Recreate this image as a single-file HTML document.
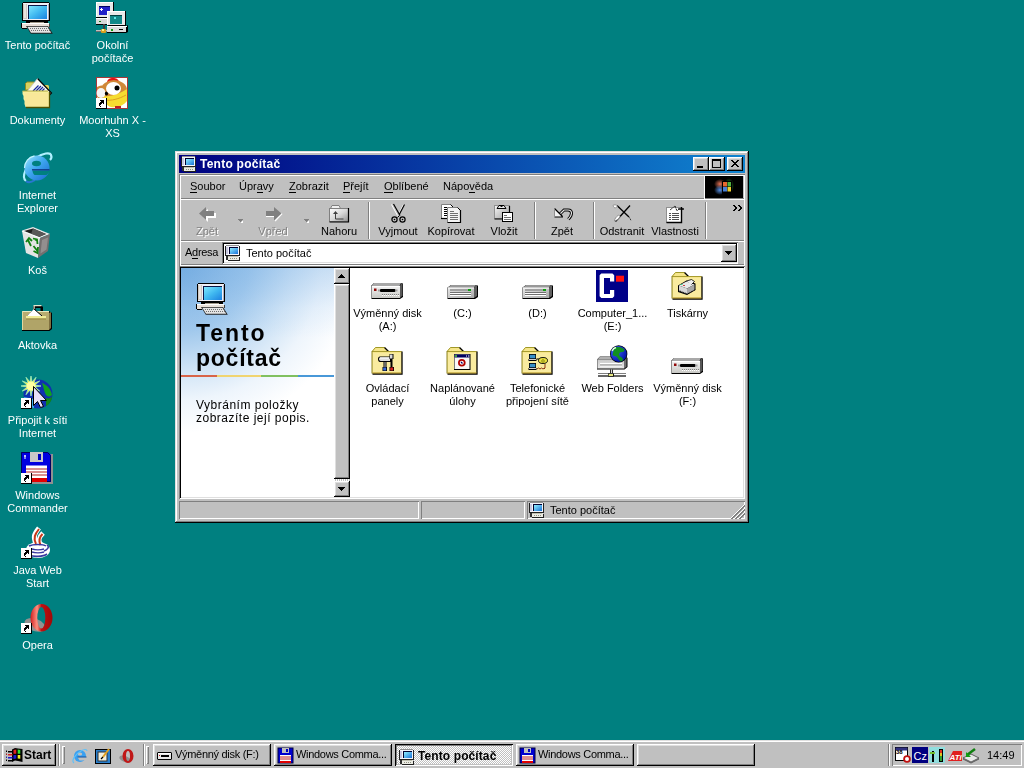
<!DOCTYPE html>
<html><head><meta charset="utf-8"><style>
*{margin:0;padding:0;box-sizing:border-box}
html,body{width:1024px;height:768px;overflow:hidden;background:#008080;font-family:"Liberation Sans", sans-serif;font-size:11px;color:#000}
body>div, .a, .w div{position:absolute}
.t{position:absolute;will-change:transform;white-space:pre;line-height:13px;font-size:11px}
.raised{background:#c0c0c0;box-shadow:inset -1px -1px #000,inset 1px 1px #fff,inset -2px -2px #808080,inset 2px 2px #dfdfdf}
.raisedw{background:#c0c0c0;box-shadow:inset -1px -1px #000,inset 1px 1px #dfdfdf,inset -2px -2px #808080,inset 2px 2px #fff}
.sunk{box-shadow:inset 1px 1px #808080,inset -1px -1px #fff,inset 2px 2px #000,inset -2px -2px #dfdfdf}
.thin{box-shadow:inset 1px 1px #808080,inset -1px -1px #fff}
.lbl{position:absolute;will-change:transform;width:75px;text-align:center;color:#fff;white-space:pre;line-height:13px;font-size:11px}
.lbk{position:absolute;will-change:transform;width:75px;text-align:center;color:#000;white-space:pre;line-height:13px;font-size:11px}
svg{position:absolute;overflow:visible}
u{text-decoration:none;border-bottom:1px solid #000;}
</style></head>
<body>
<svg style="left:21px;top:2px" width="32" height="32" viewBox="0 0 32 32"><defs><linearGradient id="scr" x1="0" y1="0" x2="1" y2="1"><stop offset="0" stop-color="#7ee8ff"/><stop offset=".5" stop-color="#40b8f0"/><stop offset="1" stop-color="#1c80e0"/></linearGradient></defs><g shape-rendering="crispEdges"><path d="M2 0h25l2 2v17h-28v-17z" fill="#000"/><rect x="2" y="1" width="26" height="17" fill="#f0f0f8"/><rect x="2" y="2" width="4" height="15" fill="#d0c8c0"/><rect x="3" y="2" width="2" height="14" fill="#e8e4e0"/><rect x="7" y="3" width="19" height="14" fill="#0c1848"/><rect x="8" y="4" width="18" height="13" fill="url(#scr)"/><rect x="27" y="2" width="1" height="16" fill="#b0b0c0"/><rect x="5" y="19" width="22" height="3" fill="#000"/><rect x="9" y="20" width="14" height="1" fill="#a09888"/><path d="M1 21h27v5h-27z" fill="#e8e0d8"/><rect x="1" y="21" width="27" height="1" fill="#fff"/><rect x="0" y="21" width="1" height="5" fill="#000"/><rect x="1" y="26" width="5" height="1" fill="#000"/><rect x="28" y="22" width="1" height="3" fill="#404040"/></g><path d="M5 24h22l4.8 7.8h-22z" fill="#202020"/><path d="M6.3 24.8h20.3l3.6 6h-20.2z" fill="#e4e4e4"/><path d="M9 26h1v1h-1zM11 26h1v1h-1zM13 26h1v1h-1zM15 26h1v1h-1zM17 26h1v1h-1zM19 26h1v1h-1zM21 26h1v1h-1zM23 26h1v1h-1zM25 26h1v1h-1zM27 26h1v1h-1zM10 28h1v1h-1zM12 28h1v1h-1zM14 28h1v1h-1zM16 28h1v1h-1zM18 28h1v1h-1zM20 28h1v1h-1zM22 28h1v1h-1zM24 28h1v1h-1zM26 28h1v1h-1zM28 28h1v1h-1z" fill="#707070" shape-rendering="crispEdges"/></svg><div class="lbl" style="left:0px;top:39px">Tento počítač</div><svg style="left:96px;top:2px" width="32" height="32" viewBox="0 0 32 32"><rect x="0" y="0" width="18" height="16" fill="#000"/><rect x="0" y="0" width="17" height="15" fill="#e8e8e8"/><rect x="0" y="0" width="17" height="1" fill="#fff"/><rect x="0" y="0" width="1" height="15" fill="#fff"/><rect x="3" y="4" width="11" height="9" fill="#2020c8"/><rect x="3" y="4" width="11" height="1" fill="#000060"/><path d="M5 6h1v1h1v1h-1v1h-1v-1h-1v-1h1z" fill="#fff"/><rect x="0" y="16" width="14" height="7" fill="#000"/><rect x="0" y="16" width="13" height="6" fill="#d8d8d8"/><rect x="0" y="16" width="13" height="1" fill="#fff"/><rect x="3" y="19" width="2" height="1" fill="#108010"/><rect x="7" y="22" width="2" height="6" fill="#404040"/><rect x="0" y="28" width="14" height="2" fill="#707070"/><rect x="0" y="28" width="14" height="1" fill="#c0c0c0"/><rect x="5" y="27" width="5" height="4" fill="#d8a020" rx="1"/><rect x="6" y="27" width="2" height="2" fill="#fff080"/><rect x="12" y="9" width="18" height="15" fill="#000"/><rect x="11" y="9" width="18" height="14" fill="#e8e8e8"/><rect x="11" y="9" width="18" height="1" fill="#fff"/><rect x="11" y="9" width="1" height="14" fill="#fff"/><rect x="14" y="13" width="12" height="9" fill="#108888"/><rect x="14" y="13" width="12" height="1" fill="#004040"/><path d="M18 15h2v2h-2z" fill="#60e8e8"/><path d="M11 24h19l2 -1v7l-2 1h-19z" fill="#000"/><rect x="11" y="24" width="19" height="6" fill="#dcdcdc"/><rect x="11" y="24" width="20" height="1" fill="#fff"/><rect x="15" y="27" width="2" height="2" fill="#10a010"/><rect x="23" y="27" width="4" height="1" fill="#000"/></svg><div class="lbl" style="left:75px;top:39px">Okolní
počítače</div><svg style="left:21px;top:77px" width="32" height="32" viewBox="0 0 32 32"><path d="M4.5 13v-6.5l1.5-1.5h7l1 1v7z" fill="#d8d060" stroke="#908820" stroke-width="1"/><path d="M21 8h6l1 1v5h-7z" fill="#d8d060"/><path d="M16.5 1.5l14 14.5l-3 3h-21l-1-4z" fill="#fcfcf4"/><path d="M16.5 1.5l14 14.5l-3 3" stroke="#000" stroke-width="1.2" fill="none"/><path d="M6 14.5l10.5-13" stroke="#c0c0c0" stroke-width=".8"/><path d="M12 14l5.5-5.5M15 14l5-5M18 14l4-4M21 14l2.5-2.5" stroke="#1828a0" stroke-width="1.2"/><path d="M1.5 14h25.5l1 1v15h-23.5l-1-3v-3l-1-2v-3l-1-2z" fill="#f6ee9c"/><path d="M1.5 14h25.5" stroke="#b0a838" stroke-width="1"/><path d="M28.5 15v15.5h-23.5" stroke="#505000" stroke-width="1.3" fill="none"/><rect x="4" y="16" width="23" height="13" fill="#ffd890" opacity=".25"/></svg><div class="lbl" style="left:0px;top:114px">Dokumenty</div><svg style="left:96px;top:77px" width="32" height="32" viewBox="0 0 32 32"><rect x="0.5" y="0.5" width="31" height="31" fill="#fff" stroke="#a83838" stroke-width="1"/><path d="M11 6c0-4 3-5 6-5c3 0 6 1 6 5z" fill="#e81010"/><ellipse cx="18" cy="13" rx="13" ry="10" fill="#d08838"/><path d="M1 10c3-2 6-2 8 0v10c-3 2-6 2-8 0z" fill="#d08838"/><path d="M7 19c8 1 16-2 24-7v12c-3 4-9 7-16 6c-4-1-7-5-8-11z" fill="#f6dc30"/><path d="M9 23c6 1 14-1 21-5" stroke="#e0a020" stroke-width="1" fill="none"/><ellipse cx="5" cy="16" rx="4.5" ry="5" fill="#f4f4f4"/><ellipse cx="10.5" cy="16.5" rx="1.6" ry="2" fill="#000"/><ellipse cx="17.5" cy="11.5" rx="7.5" ry="6.5" fill="#fff"/><circle cx="21" cy="11" r="2.5" fill="#000"/><rect x="19" y="29" width="6" height="2" fill="#c02020"/><g shape-rendering="crispEdges"><path d="M0 21h10v10h-10z" fill="#fff"/><path d="M10 21h1v11h-11v-1h10z" fill="#000"/><path d="M4 23h4v1h-4zM5 24h3v1h-3zM4 25h4v1h-4zM3 26h3v1h-3zM7 26h1v1h-1zM3 27h2v1h-2zM3 28h1v1h-1zM4 29h1v1h-1z" fill="#000"/></g></svg><div class="lbl" style="left:75px;top:114px">Moorhuhn X -
XS</div><svg style="left:21px;top:152px" width="32" height="32" viewBox="0 0 32 32"><defs><linearGradient id="ieg" x1="0" y1="0" x2="1" y2="1"><stop offset="0" stop-color="#a0e8ff"/><stop offset=".45" stop-color="#40a8f0"/><stop offset="1" stop-color="#1868d0"/></linearGradient></defs><path d="M5 29c-5-4 0-16 10-23c7-5 14-6 15-3c1 2 0 4-1 5" stroke="#b0f0ff" stroke-width="2.2" fill="none"/><path d="M5 29c2 2 6 1 9-1" stroke="#2878d0" stroke-width="2" fill="none"/><circle cx="16" cy="16" r="12.5" fill="url(#ieg)"/><path d="M3.5 16a12.5 12.5 0 0 1 10-12.2" stroke="#c0f4ff" stroke-width="1.2" fill="none"/><ellipse cx="15.5" cy="11.5" rx="4.5" ry="2.8" fill="#008080"/><path d="M11.5 18.5h17v1.5c-1 1-2 2-3 3h-12c-1-1-2-2.5-2-4.5z" fill="#008080"/><path d="M11 17.8h17.5" stroke="#103888" stroke-width="1.4"/></svg><div class="lbl" style="left:0px;top:189px">Internet
Explorer</div><svg style="left:21px;top:227px" width="32" height="32" viewBox="0 0 32 32"><path d="M1 3.5l11-3.5l17 7l-10 4z" fill="#e8e8e8"/><path d="M3 4l9-2.5l13 5.5l-7 3z" fill="#202020"/><path d="M12 1.5l13 5.5l-7 3l-8-3z" fill="#585858"/><path d="M1 4l18 7l-2 20l-12-5z" fill="#e4e4e4"/><path d="M19 11l10-4l-2 17l-10 7z" fill="#747070"/><path d="M21 13l6-2.5l-1.5 12l-6 4z" fill="#a8a4a4" opacity=".6"/><path d="M1 4l18 7" stroke="#fff" stroke-width="1.2"/><path d="M5 15l3-4l3 3M7 13l3 6M12 11.5l4 1l0.5 4.5M14 12.5l2 1M17 20l-0.5 6l-4-2M16.5 24l-4-5" stroke="#108010" stroke-width="1.8" fill="none"/></svg><div class="lbl" style="left:0px;top:264px">Koš</div><svg style="left:21px;top:302px" width="32" height="32" viewBox="0 0 32 32"><path d="M13 3.5h7.5l1.5 1.5v5h-2.5v-4h-5v4h-2.5v-5z" fill="#000"/><path d="M12.5 3h8v1.2h-6.8v5h-1.2z" fill="#e0e8d0"/><path d="M2 9h26l3 2v16l-2.5 2h-27.5v-19z" fill="#000"/><rect x="1" y="9" width="27" height="19" fill="#b8ac70"/><path d="M28 11l2-1v16l-2 2z" fill="#807040"/><rect x="1" y="9" width="27" height="1" fill="#e8e8c0"/><rect x="1" y="9" width="1" height="19" fill="#e0d8a0"/><path d="M6 14l7-7l8 7z" fill="#fff"/><path d="M13 7l8 7" stroke="#000" stroke-width="1"/><path d="M6 14l7-7" stroke="#808080" stroke-width=".8" stroke-dasharray="1 1"/><rect x="5" y="14" width="20" height="2.5" fill="#f0ec98"/><rect x="5" y="16.5" width="20" height="1" fill="#908038"/><rect x="2" y="18" width="26" height="10" fill="#a89c60" opacity=".5"/></svg><div class="lbl" style="left:0px;top:339px">Aktovka</div><svg style="left:21px;top:377px" width="32" height="32" viewBox="0 0 32 32"><circle cx="17" cy="17" r="14.5" fill="#1030b0"/><path d="M21 6c5 2 9 6 10 12c-2 2-4 2-6 0c-2-3-2-7-4-12z" fill="#10a020"/><path d="M25 21c3 1 5 0 6-2c0 4-2 8-6 10z" fill="#108818"/><path d="M3 20c1 6 5 10 10 11v-9z" fill="#40b0f0"/><polygon points="20.0,9.0 13.9,10.0 18.7,14.0 12.8,11.8 15.0,17.7 11.0,12.9 10.0,19.0 9.0,12.9 5.0,17.7 7.2,11.8 1.3,14.0 6.1,10.0 0.0,9.0 6.1,8.0 1.3,4.0 7.2,6.2 5.0,0.3 9.0,5.1 10.0,-1.0 11.0,5.1 15.0,0.3 12.8,6.2 18.7,4.0 13.9,8.0" fill="#f8f040"/><polygon points="20.0,9.0 13.9,10.0 18.7,14.0 12.8,11.8 15.0,17.7 11.0,12.9 10.0,19.0 9.0,12.9 5.0,17.7 7.2,11.8 1.3,14.0 6.1,10.0 0.0,9.0 6.1,8.0 1.3,4.0 7.2,6.2 5.0,0.3 9.0,5.1 10.0,-1.0 11.0,5.1 15.0,0.3 12.8,6.2 18.7,4.0 13.9,8.0" fill="none" stroke="#a0f0c0" stroke-width=".8"/><circle cx="10" cy="9" r="4.5" fill="#ffffa0"/><path d="M12.5 9.5v19l4-4l3 6l3-1l-3-6h6z" fill="#e8e0f8" stroke="#000" stroke-width="1"/><g shape-rendering="crispEdges"><path d="M0 21h10v10h-10z" fill="#fff"/><path d="M10 21h1v11h-11v-1h10z" fill="#000"/><path d="M4 23h4v1h-4zM5 24h3v1h-3zM4 25h4v1h-4zM3 26h3v1h-3zM7 26h1v1h-1zM3 27h2v1h-2zM3 28h1v1h-1zM4 29h1v1h-1z" fill="#000"/></g></svg><div class="lbl" style="left:0px;top:414px">Připojit k síti
Internet</div><svg style="left:21px;top:452px" width="32" height="32" viewBox="0 0 32 32"><rect x="2" y="2" width="30" height="30" fill="#909090"/><path d="M0 0h27l3 3v27h-30z" fill="#0000e0"/><path d="M0.5 0.5h26l3 3v26h-29z" stroke="#000060" stroke-width="1" fill="none"/><rect x="9" y="0" width="13" height="10" fill="#c8c8c8"/><rect x="17" y="2" width="3" height="6" fill="#0000c0"/><path d="M4 3v4M3 4h2" stroke="#fff" stroke-width="1"/><rect x="5" y="13.5" width="21" height="16" fill="#fff"/><path d="M5 17h21M5 20h21M5 23h21" stroke="#b02020" stroke-width="1"/><rect x="5" y="26" width="21" height="4" fill="#e00000"/><g shape-rendering="crispEdges"><path d="M0 21h10v10h-10z" fill="#fff"/><path d="M10 21h1v11h-11v-1h10z" fill="#000"/><path d="M4 23h4v1h-4zM5 24h3v1h-3zM4 25h4v1h-4zM3 26h3v1h-3zM7 26h1v1h-1zM3 27h2v1h-2zM3 28h1v1h-1zM4 29h1v1h-1z" fill="#000"/></g></svg><div class="lbl" style="left:0px;top:489px">Windows
Commander</div><svg style="left:21px;top:527px" width="32" height="32" viewBox="0 0 32 32"><path d="M18 1c-5 6-6 9-3 16M22 6c-5 5-5 8-2 12" stroke="#fff" stroke-width="5" fill="none"/><ellipse cx="17" cy="23" rx="12" ry="8" fill="#fff"/><path d="M18 2c-4 5-6 9-3 15M21.5 7c-4 4-4 7-2 11" stroke="#c83818" stroke-width="2" fill="none"/><path d="M8 19c4-2 14-2 17 0M26 18c3 2 0 5-3 6" stroke="#3838a0" stroke-width="1.5" fill="none"/><path d="M11 22c3 1 9 1 12 0M11 25c3 1 9 1 12 0M8 28c4 2 14 2 18 -1" stroke="#3838a0" stroke-width="1.6" fill="none"/><g shape-rendering="crispEdges"><path d="M0 21h10v10h-10z" fill="#fff"/><path d="M10 21h1v11h-11v-1h10z" fill="#000"/><path d="M4 23h4v1h-4zM5 24h3v1h-3zM4 25h4v1h-4zM3 26h3v1h-3zM7 26h1v1h-1zM3 27h2v1h-2zM3 28h1v1h-1zM4 29h1v1h-1z" fill="#000"/></g></svg><div class="lbl" style="left:0px;top:564px">Java Web
Start</div><svg style="left:21px;top:602px" width="32" height="32" viewBox="0 0 32 32"><defs><linearGradient id="opg" x1="0" y1="0" x2="1" y2="0"><stop offset="0" stop-color="#d02020"/><stop offset=".3" stop-color="#ff9080"/><stop offset=".5" stop-color="#c01010"/><stop offset="1" stop-color="#a00808"/></linearGradient></defs><ellipse cx="14" cy="23" rx="11" ry="6" fill="#909090" transform="rotate(20 14 23)"/><path fill-rule="evenodd" d="M20.5 2a11 13.8 0 1 1 0 27.6a11 13.8 0 1 1 0-27.6zM20.3 5a4 10.8 0 1 0 0 21.6a4 10.8 0 1 0 0-21.6z" fill="url(#opg)"/><g shape-rendering="crispEdges"><path d="M0 21h10v10h-10z" fill="#fff"/><path d="M10 21h1v11h-11v-1h10z" fill="#000"/><path d="M4 23h4v1h-4zM5 24h3v1h-3zM4 25h4v1h-4zM3 26h3v1h-3zM7 26h1v1h-1zM3 27h2v1h-2zM3 28h1v1h-1zM4 29h1v1h-1z" fill="#000"/></g></svg><div class="lbl" style="left:0px;top:639px">Opera</div><div class="w" style="left:175px;top:151px;width:574px;height:372px"><div class="raisedw" style="left:0px;top:0px;width:574px;height:372px;"></div><div style="left:4px;top:4px;width:566px;height:18px;background:linear-gradient(to right,#000080,#1084d0)"></div><svg style="left:6px;top:5px" width="16" height="16" viewBox="0 0 16 16"><defs><linearGradient id="scr16" x1="0" y1="0" x2="1" y2="1"><stop offset="0" stop-color="#90f0ff"/><stop offset="1" stop-color="#1870d8"/></linearGradient></defs><g shape-rendering="crispEdges"><rect x="1" y="0" width="13" height="1" fill="#909090"/><rect x="0" y="1" width="15" height="10" fill="#202020"/><rect x="1" y="1" width="13" height="9" fill="#f4f4fc"/><rect x="1" y="2" width="2" height="7" fill="#c8c8e0"/><rect x="4" y="2" width="9" height="7" fill="#000030"/><rect x="5" y="3" width="8" height="6" fill="url(#scr16)"/><rect x="1" y="11" width="2" height="4" fill="#303030"/><rect x="3" y="11" width="11" height="4" fill="#ecece4"/><rect x="3" y="11" width="10" height="1" fill="#c0c0b0"/><rect x="5" y="13" width="1" height="1" fill="#909080"/><rect x="7" y="13" width="1" height="1" fill="#909080"/><rect x="9" y="13" width="1" height="1" fill="#909080"/><rect x="11" y="13" width="1" height="1" fill="#909080"/><rect x="14" y="12" width="1" height="3" fill="#202020"/><rect x="3" y="15" width="12" height="1" fill="#202020"/></g></svg><div class="t" style="left:25px;top:7px;color:#fff;font-weight:bold;font-size:12px;letter-spacing:0.25px">Tento počítač</div><div class="raised" style="left:518px;top:6px;width:16px;height:14px;"><div style="left:4px;top:9px;width:6px;height:2px;background:#000"></div></div><div class="raised" style="left:534px;top:6px;width:16px;height:14px;"><div style="left:3px;top:2px;width:9px;height:9px;border:1px solid #000;border-top-width:2px"></div></div><div class="raised" style="left:552px;top:6px;width:16px;height:14px;"><svg style="left:4px;top:3px" width="8" height="7" viewBox="0 0 8 7" shape-rendering="crispEdges"><path d="M0 0h2v1h1v1h2v-1h1v-1h2v1h-1v1h-1v1h-1v1h1v1h1v1h1v1h-2v-1h-1v-1h-2v1h-1v1h-2v-1h1v-1h1v-1h1v-1h-1v-1h-1v-1h-1z" fill="#000"/></svg></div><div style="left:4px;top:23px;width:566px;height:92px;box-shadow:inset 1px 1px #808080,inset -1px -1px #fff"></div><div style="left:5px;top:24px;width:524px;height:24px;box-shadow:inset 1px 1px #fff,inset 0 -1px #808080"></div><div class="t" style="left:15px;top:29px;"><u>S</u>oubor</div><div class="t" style="left:64px;top:29px;">Úpr<u>a</u>vy</div><div class="t" style="left:114px;top:29px;"><u>Z</u>obrazit</div><div class="t" style="left:168px;top:29px;"><u>P</u>řejít</div><div class="t" style="left:209px;top:29px;"><u>O</u>blíbené</div><div class="t" style="left:268px;top:29px;">Nápo<u>v</u>ěda</div><div style="left:529px;top:24px;width:40px;height:24px;box-shadow:inset 1px 1px #fff,inset 0 -1px #808080"></div><div style="left:530px;top:25px;width:38px;height:22px;background:#000"><svg style="left:8px;top:1px" width="22" height="20" viewBox="0 0 22 20"><defs><radialGradient id="wg1" cx=".5" cy=".5" r=".5"><stop offset="0" stop-color="#ff8060" stop-opacity=".9"/><stop offset="1" stop-color="#ff8060" stop-opacity="0"/></radialGradient><radialGradient id="wg2" cx=".5" cy=".5" r=".5"><stop offset="0" stop-color="#60a0ff" stop-opacity=".9"/><stop offset="1" stop-color="#60a0ff" stop-opacity="0"/></radialGradient><radialGradient id="wg3" cx=".5" cy=".5" r=".5"><stop offset="0" stop-color="#40c040" stop-opacity=".8"/><stop offset="1" stop-color="#40c040" stop-opacity="0"/></radialGradient></defs><ellipse cx="7" cy="7" rx="6" ry="5" fill="url(#wg1)"/><ellipse cx="7" cy="13" rx="6" ry="5" fill="url(#wg2)"/><ellipse cx="16" cy="9" rx="5" ry="8" fill="url(#wg3)"/><path d="M9 4h10v14h-10z" fill="#000"/><rect x="10" y="5" width="4" height="4.5" fill="#e86830"/><rect x="14.5" y="5" width="3.5" height="4.5" fill="#50b040"/><rect x="10" y="10" width="4" height="4.5" fill="#4880d8"/><rect x="14.5" y="10" width="3.5" height="4.5" fill="#f0d030"/></svg></div><div style="left:5px;top:48px;width:564px;height:42px;box-shadow:inset 1px 1px #fff,inset 0 -1px #808080"></div><div style="left:5px;top:90px;width:564px;height:24px;box-shadow:inset 1px 1px #fff,inset 0 -1px #808080"></div><div class="t" style="left:10px;top:95px;letter-spacing:-0.3px">A<u>d</u>resa</div><div class="sunk" style="left:47px;top:91px;width:516px;height:22px;background:#fff"></div><svg style="left:50px;top:94px" width="16" height="16" viewBox="0 0 16 16"><defs><linearGradient id="scr16" x1="0" y1="0" x2="1" y2="1"><stop offset="0" stop-color="#90f0ff"/><stop offset="1" stop-color="#1870d8"/></linearGradient></defs><g shape-rendering="crispEdges"><rect x="1" y="0" width="13" height="1" fill="#909090"/><rect x="0" y="1" width="15" height="10" fill="#202020"/><rect x="1" y="1" width="13" height="9" fill="#f4f4fc"/><rect x="1" y="2" width="2" height="7" fill="#c8c8e0"/><rect x="4" y="2" width="9" height="7" fill="#000030"/><rect x="5" y="3" width="8" height="6" fill="url(#scr16)"/><rect x="1" y="11" width="2" height="4" fill="#303030"/><rect x="3" y="11" width="11" height="4" fill="#ecece4"/><rect x="3" y="11" width="10" height="1" fill="#c0c0b0"/><rect x="5" y="13" width="1" height="1" fill="#909080"/><rect x="7" y="13" width="1" height="1" fill="#909080"/><rect x="9" y="13" width="1" height="1" fill="#909080"/><rect x="11" y="13" width="1" height="1" fill="#909080"/><rect x="14" y="12" width="1" height="3" fill="#202020"/><rect x="3" y="15" width="12" height="1" fill="#202020"/></g></svg><div class="t" style="left:71px;top:96px;">Tento počítač</div><div class="raised" style="left:546px;top:93px;width:16px;height:18px;"><svg style="left:4px;top:7px" width="7" height="4" viewBox="0 0 7 4" shape-rendering="crispEdges"><path d="M0 0h7v1h-1v1h-1v1h-1v1h-1v-1h-1v-1h-1v-1h-1z" fill="#000"/></svg></div><div class="sunk" style="left:4px;top:115px;width:566px;height:233px;background:#fff"></div><div style="left:6px;top:117px;width:153px;height:229px;overflow:hidden"><div style="left:0;top:0;width:153px;height:229px;background:radial-gradient(ellipse 175px 165px at 0 0,#74ace0 0%,#a0c8ec 38%,#d0e4f6 62%,#eef5fc 80%,#fff 100%)"></div><div style="left:0;top:0;width:153px;height:229px;background:linear-gradient(to bottom,rgba(120,175,228,.35) 0,rgba(160,200,240,.15) 40px,rgba(255,255,255,0) 70px)"></div><svg style="left:15px;top:15px" width="32" height="32" viewBox="0 0 32 32"><defs><linearGradient id="scr" x1="0" y1="0" x2="1" y2="1"><stop offset="0" stop-color="#7ee8ff"/><stop offset=".5" stop-color="#40b8f0"/><stop offset="1" stop-color="#1c80e0"/></linearGradient></defs><g shape-rendering="crispEdges"><path d="M2 0h25l2 2v17h-28v-17z" fill="#000"/><rect x="2" y="1" width="26" height="17" fill="#f0f0f8"/><rect x="2" y="2" width="4" height="15" fill="#d0c8c0"/><rect x="3" y="2" width="2" height="14" fill="#e8e4e0"/><rect x="7" y="3" width="19" height="14" fill="#0c1848"/><rect x="8" y="4" width="18" height="13" fill="url(#scr)"/><rect x="27" y="2" width="1" height="16" fill="#b0b0c0"/><rect x="5" y="19" width="22" height="3" fill="#000"/><rect x="9" y="20" width="14" height="1" fill="#a09888"/><path d="M1 21h27v5h-27z" fill="#e8e0d8"/><rect x="1" y="21" width="27" height="1" fill="#fff"/><rect x="0" y="21" width="1" height="5" fill="#000"/><rect x="1" y="26" width="5" height="1" fill="#000"/><rect x="28" y="22" width="1" height="3" fill="#404040"/></g><path d="M5 24h22l4.8 7.8h-22z" fill="#202020"/><path d="M6.3 24.8h20.3l3.6 6h-20.2z" fill="#e4e4e4"/><path d="M9 26h1v1h-1zM11 26h1v1h-1zM13 26h1v1h-1zM15 26h1v1h-1zM17 26h1v1h-1zM19 26h1v1h-1zM21 26h1v1h-1zM23 26h1v1h-1zM25 26h1v1h-1zM27 26h1v1h-1zM10 28h1v1h-1zM12 28h1v1h-1zM14 28h1v1h-1zM16 28h1v1h-1zM18 28h1v1h-1zM20 28h1v1h-1zM22 28h1v1h-1zM24 28h1v1h-1zM26 28h1v1h-1zM28 28h1v1h-1z" fill="#707070" shape-rendering="crispEdges"/></svg><div class="t" style="left:15px;top:53px;font-weight:bold;font-size:23px;line-height:25px;letter-spacing:1.9px">Tento</div><div class="t" style="left:15px;top:78px;font-weight:bold;font-size:23px;line-height:25px;letter-spacing:0.75px">počítač</div><div style="left:0;top:107px;width:153px;height:2px;background:linear-gradient(to right,#d86448 0 23.5%,#f0d470 23.5% 52%,#80c060 52% 76.5%,#4898d8 76.5%)"></div><div class="t" style="left:15px;top:131px;font-size:12px;letter-spacing:0.5px;line-height:13px">Vybráním položky
zobrazíte její popis.</div></div><svg style="left:196px;top:119px" width="32" height="32" viewBox="0 0 32 32"><defs><linearGradient id="fdg" x1="0" y1="0" x2="0" y2="1"><stop offset="0" stop-color="#f4f4f4"/><stop offset="1" stop-color="#c8c8c4"/></linearGradient></defs><path d="M3 13h28l1 1v13l-3 2h-28l-1-1v-12z" fill="#000"/><path d="M3 13h27l-1.5 3h-28z" fill="#a8a8a8"/><rect x="0.5" y="16" width="28.5" height="12" fill="url(#fdg)"/><rect x="0.5" y="16" width="28.5" height="1" fill="#fff"/><rect x="0" y="16" width="1" height="12" fill="#909090"/><path d="M29 16l1.5-3h1v12.5l-2.5 2.5z" fill="#585858"/><rect x="9" y="19" width="15.5" height="3" rx="1" fill="#000"/><rect x="7" y="19.5" width="2" height="2" fill="#a0a0a0"/><rect x="24.5" y="19.5" width="2" height="2" fill="#a0a0a0"/><rect x="3" y="18.5" width="2.5" height="2.5" fill="#900808"/><path d="M11 24.5h18" stroke="#808080" stroke-width="1" stroke-dasharray="1 1"/><path d="M11 25.5h18" stroke="#fff" stroke-width="1" stroke-dasharray="1 1"/></svg><div class="lbk" style="left:175px;top:156px">Výměnný disk
(A:)</div><svg style="left:271px;top:119px" width="32" height="32" viewBox="0 0 32 32"><defs><linearGradient id="hdg" x1="0" y1="0" x2="1" y2="1"><stop offset="0" stop-color="#e8e8e8"/><stop offset="1" stop-color="#a8a8a8"/></linearGradient></defs><path d="M5 15h26l1 1v11l-3 2h-27l-1-1v-10z" fill="#000"/><path d="M5 15h25l-2 2.5h-26z" fill="#989898"/><rect x="1.5" y="17.5" width="26.5" height="10.5" fill="url(#hdg)"/><rect x="1.5" y="17.5" width="26.5" height="1" fill="#fff"/><rect x="1" y="17.5" width="1" height="10.5" fill="#909090"/><path d="M28 17.5l2-2.5h1v11l-3 2z" fill="#606060"/><rect x="4" y="19" width="18" height="2" fill="#a0a0a0"/><rect x="22" y="19" width="3" height="2" fill="#10a010"/><path d="M4 22.5h21M4 24.5h21" stroke="#707070" stroke-width="1"/><path d="M4 23.5h21M4 25.5h21" stroke="#fff" stroke-width="1"/></svg><div class="lbk" style="left:250px;top:156px">(C:)</div><svg style="left:346px;top:119px" width="32" height="32" viewBox="0 0 32 32"><defs><linearGradient id="hdg" x1="0" y1="0" x2="1" y2="1"><stop offset="0" stop-color="#e8e8e8"/><stop offset="1" stop-color="#a8a8a8"/></linearGradient></defs><path d="M5 15h26l1 1v11l-3 2h-27l-1-1v-10z" fill="#000"/><path d="M5 15h25l-2 2.5h-26z" fill="#989898"/><rect x="1.5" y="17.5" width="26.5" height="10.5" fill="url(#hdg)"/><rect x="1.5" y="17.5" width="26.5" height="1" fill="#fff"/><rect x="1" y="17.5" width="1" height="10.5" fill="#909090"/><path d="M28 17.5l2-2.5h1v11l-3 2z" fill="#606060"/><rect x="4" y="19" width="18" height="2" fill="#a0a0a0"/><rect x="22" y="19" width="3" height="2" fill="#10a010"/><path d="M4 22.5h21M4 24.5h21" stroke="#707070" stroke-width="1"/><path d="M4 23.5h21M4 25.5h21" stroke="#fff" stroke-width="1"/></svg><div class="lbk" style="left:325px;top:156px">(D:)</div><svg style="left:421px;top:119px" width="32" height="32" viewBox="0 0 32 32"><rect x="0" y="0" width="32" height="32" fill="#000088"/><path d="M5.3 3.6h11.2l1.7 1.7v6.3h-4.2v-3.6h-6v16h6v-4h4.2v6.3l-1.7 1.7h-11.2l-1.7-1.7v-21z" fill="#fff"/><rect x="20" y="5.7" width="8" height="6" fill="#ff1010"/></svg><div class="lbk" style="left:400px;top:156px">Computer_1...
(E:)</div><svg style="left:496px;top:119px" width="32" height="32" viewBox="0 0 32 32"><path d="M1 6l3.5-4h9l4 4h13.5v22.5h-30z" fill="#f6e68a"/><path d="M1.5 6l3-3.5h9" stroke="#a09828" stroke-width="1" fill="none"/><path d="M13.5 2.5l4 4" stroke="#000" stroke-width="1.2"/><path d="M1 6.5h29.5" stroke="#a89c30" stroke-width="1"/><path d="M1 6v22.5" stroke="#8a8020" stroke-width="1"/><path d="M31 6.5v22.5h-29.5" stroke="#000" stroke-width="1.3" fill="none"/><rect x="2" y="8" width="28" height="19.5" fill="#fff8d0" opacity=".3"/><path d="M1.5 28h29" stroke="#b09020" stroke-width="1"/><g transform="translate(-1.5 -2.5)"><path d="M8.5 18l8.5-5l9 3v6.5l-8.5 5l-9-3z" fill="#000"/><path d="M9.5 18l7.5-4l8 3l-7.5 4z" fill="#e8e8e8"/><path d="M9.5 18l8 3v5.5l-8-3z" fill="#d8d8d8"/><path d="M17.5 21l7.5-4v5.5l-7.5 4z" fill="#a8a8a8"/><path d="M17 13.5l5-1.5l3 2l-3 3" fill="#f0f0f0" stroke="#000" stroke-width=".8"/><rect x="13.5" y="17.5" width="2" height="1" fill="#d04040"/><rect x="11" y="16.5" width="2" height="1" fill="#40c080"/><path d="M9 23l9 3.5l8-4.5" stroke="#000" stroke-width="1" fill="none" stroke-dasharray="1 .7"/></g></svg><div class="lbk" style="left:475px;top:156px">Tiskárny</div><svg style="left:196px;top:194px" width="32" height="32" viewBox="0 0 32 32"><path d="M1 6l3.5-4h9l4 4h13.5v22.5h-30z" fill="#f6e68a"/><path d="M1.5 6l3-3.5h9" stroke="#a09828" stroke-width="1" fill="none"/><path d="M13.5 2.5l4 4" stroke="#000" stroke-width="1.2"/><path d="M1 6.5h29.5" stroke="#a89c30" stroke-width="1"/><path d="M1 6v22.5" stroke="#8a8020" stroke-width="1"/><path d="M31 6.5v22.5h-29.5" stroke="#000" stroke-width="1.3" fill="none"/><rect x="2" y="8" width="28" height="19.5" fill="#fff8d0" opacity=".3"/><path d="M1.5 28h29" stroke="#b09020" stroke-width="1"/><path d="M7 14c0-2 1-2.5 3-2.5h10v5.5h-10c-2 0-3-.5-3-3z" fill="#000"/><path d="M8 14c0-1.5 1-1.8 2.5-1.8h8.5v3.8h-8.5c-1.5 0-2.5-.5-2.5-2z" fill="#e0e0e0"/><rect x="9" y="12.5" width="9" height="1" fill="#fff"/><rect x="12.5" y="17" width="3" height="6" fill="#000"/><rect x="13.3" y="17" width="1.4" height="5" fill="#909090"/><rect x="11.5" y="22" width="4.5" height="4" fill="#000"/><rect x="12.2" y="22.5" width="3" height="3" fill="#3868d8"/><rect x="18.5" y="9" width="4" height="5" fill="#000"/><rect x="19" y="9.5" width="2.5" height="4" fill="#d8d8d8"/><rect x="19.5" y="14" width="2" height="8" fill="#000"/><rect x="18.5" y="22" width="4.5" height="4" fill="#000"/><rect x="19.2" y="22.5" width="3" height="3" fill="#d02020"/></svg><div class="lbk" style="left:175px;top:231px">Ovládací
panely</div><svg style="left:271px;top:194px" width="32" height="32" viewBox="0 0 32 32"><path d="M1 6l3.5-4h9l4 4h13.5v22.5h-30z" fill="#f6e68a"/><path d="M1.5 6l3-3.5h9" stroke="#a09828" stroke-width="1" fill="none"/><path d="M13.5 2.5l4 4" stroke="#000" stroke-width="1.2"/><path d="M1 6.5h29.5" stroke="#a89c30" stroke-width="1"/><path d="M1 6v22.5" stroke="#8a8020" stroke-width="1"/><path d="M31 6.5v22.5h-29.5" stroke="#000" stroke-width="1.3" fill="none"/><rect x="2" y="8" width="28" height="19.5" fill="#fff8d0" opacity=".3"/><path d="M1.5 28h29" stroke="#b09020" stroke-width="1"/><rect x="8" y="9" width="16.5" height="16" fill="#000"/><rect x="8.5" y="9.5" width="15" height="14.5" fill="#f8f8f8"/><rect x="8.5" y="9.5" width="15" height="3" fill="#000060"/><rect x="9" y="10" width="2" height="2" fill="#40a040"/><rect x="20" y="10.5" width="1" height="1" fill="#fff"/><rect x="22" y="10.5" width="1" height="1" fill="#fff"/><circle cx="15.8" cy="17.8" r="3.8" fill="#b00000"/><circle cx="15.8" cy="17.8" r="2" fill="#fff"/><path d="M15 17l1.5 1.5" stroke="#000060" stroke-width="1.2"/></svg><div class="lbk" style="left:250px;top:231px">Naplánované
úlohy</div><svg style="left:346px;top:194px" width="32" height="32" viewBox="0 0 32 32"><path d="M1 6l3.5-4h9l4 4h13.5v22.5h-30z" fill="#f6e68a"/><path d="M1.5 6l3-3.5h9" stroke="#a09828" stroke-width="1" fill="none"/><path d="M13.5 2.5l4 4" stroke="#000" stroke-width="1.2"/><path d="M1 6.5h29.5" stroke="#a89c30" stroke-width="1"/><path d="M1 6v22.5" stroke="#8a8020" stroke-width="1"/><path d="M31 6.5v22.5h-29.5" stroke="#000" stroke-width="1.3" fill="none"/><rect x="2" y="8" width="28" height="19.5" fill="#fff8d0" opacity=".3"/><path d="M1.5 28h29" stroke="#b09020" stroke-width="1"/><rect x="8" y="9" width="7" height="5" fill="#000"/><rect x="8.8" y="9.8" width="5.5" height="3.5" fill="#3890c8"/><rect x="7.5" y="14" width="8" height="2" fill="#000"/><rect x="8" y="14" width="7" height="1" fill="#d0d0d0"/><rect x="8" y="18" width="7" height="5" fill="#000"/><rect x="8.8" y="18.8" width="5.5" height="3.5" fill="#3890c8"/><rect x="7.5" y="23" width="8" height="2" fill="#000"/><rect x="8" y="23" width="7" height="1" fill="#d0d0d0"/><path d="M15.5 14h3" stroke="#000" stroke-width="1"/><ellipse cx="22" cy="15.5" rx="4.5" ry="3" fill="#e8e040" stroke="#000" stroke-width=".9"/><circle cx="22" cy="16" r="1.3" fill="none" stroke="#707000" stroke-width=".7"/><path d="M24 19v4l-1 1M16 24l1.5-1l1.5 1l1.5-1l1.5 1l1.5-1" stroke="#802000" stroke-width=".9" fill="none"/></svg><div class="lbk" style="left:325px;top:231px">Telefonické
připojení sítě</div><svg style="left:421px;top:194px" width="32" height="32" viewBox="0 0 32 32"><defs><linearGradient id="wfg" x1="0" y1="0" x2="0" y2="1"><stop offset="0" stop-color="#c8c8c8"/><stop offset="1" stop-color="#e8e8e8"/></linearGradient><radialGradient id="glb" cx=".3" cy=".3" r=".8"><stop offset="0" stop-color="#4060ff"/><stop offset="1" stop-color="#0010a0"/></radialGradient></defs><path d="M4 11.5h26l1.5 1.5v9l-3 2.5h-27.5v-10z" fill="#000"/><path d="M4 11.5h25l-1.5 3h-26z" fill="#b0b0b0"/><rect x="1.5" y="14.5" width="26.5" height="9" fill="url(#wfg)"/><rect x="1" y="14.5" width="1" height="9" fill="#909090"/><path d="M28 14.5l1.5-3h1v10l-2.5 2.5z" fill="#707070"/><path d="M4 18.5h22M4 21h22" stroke="#fff" stroke-width="1.2"/><path d="M4 20h22" stroke="#808080" stroke-width=".8"/><rect x="14" y="24.5" width="3" height="4" fill="#000"/><rect x="14.8" y="24.5" width="1.4" height="4" fill="#e0e0e0"/><path d="M2 28.5h28" stroke="#808080" stroke-width="1"/><path d="M2 31h28" stroke="#000" stroke-width="1.2"/><rect x="12" y="28.5" width="6" height="3" fill="#000"/><rect x="12.6" y="29" width="4.5" height="2" fill="#e8e880"/><circle cx="22.7" cy="8.9" r="8.7" fill="#000"/><circle cx="22.7" cy="8.9" r="8" fill="url(#glb)"/><path d="M18 2.5c3-1 7-1 10 1.5c1 2 0 3-2 3c-2 0-3 1-3 3c1 2 3 2 4 4c0 2-2 3-3 2c-2-2-3-5-5-5c-2 0-3-1-2-3z" fill="#109020"/><path d="M16 6c1-2 2-3 4-3.5" stroke="#e0ffe0" stroke-width="1.4" fill="none"/></svg><div class="lbk" style="left:400px;top:231px">Web Folders</div><svg style="left:496px;top:194px" width="32" height="32" viewBox="0 0 32 32"><defs><linearGradient id="fdg" x1="0" y1="0" x2="0" y2="1"><stop offset="0" stop-color="#f4f4f4"/><stop offset="1" stop-color="#c8c8c4"/></linearGradient></defs><path d="M3 13h28l1 1v13l-3 2h-28l-1-1v-12z" fill="#000"/><path d="M3 13h27l-1.5 3h-28z" fill="#a8a8a8"/><rect x="0.5" y="16" width="28.5" height="12" fill="url(#fdg)"/><rect x="0.5" y="16" width="28.5" height="1" fill="#fff"/><rect x="0" y="16" width="1" height="12" fill="#909090"/><path d="M29 16l1.5-3h1v12.5l-2.5 2.5z" fill="#585858"/><rect x="9" y="19" width="15.5" height="3" rx="1" fill="#000"/><rect x="7" y="19.5" width="2" height="2" fill="#a0a0a0"/><rect x="24.5" y="19.5" width="2" height="2" fill="#a0a0a0"/><rect x="3" y="18.5" width="2.5" height="2.5" fill="#900808"/><path d="M11 24.5h18" stroke="#808080" stroke-width="1" stroke-dasharray="1 1"/><path d="M11 25.5h18" stroke="#fff" stroke-width="1" stroke-dasharray="1 1"/></svg><div class="lbk" style="left:475px;top:231px">Výměnný disk
(F:)</div><svg style="left:22px;top:53px" width="20" height="20" viewBox="0 0 20 20"><path d="M3 10l7-6v13z" fill="#fff" transform="translate(1 1)"/><rect x="10" y="8" width="8" height="5" fill="#fff" transform="translate(1 1)"/><path d="M2 9.5l7-6.5v13z" fill="#808080"/><rect x="9" y="7" width="8" height="5" fill="#808080"/></svg><div class="t" style="left:-8px;top:74px;width:80px;text-align:center;color:#808080;text-shadow:1px 1px #fff">Zpět</div><svg style="left:88px;top:53px" width="20" height="20" viewBox="0 0 20 20"><rect x="3" y="8" width="8" height="5" fill="#fff"/><path d="M12 17l7-7.5" stroke="#fff" stroke-width="1.4"/><rect x="3" y="7" width="8" height="5" fill="#808080"/><path d="M11 3l7.5 6.5l-7.5 7z" fill="#808080"/></svg><div class="t" style="left:58px;top:74px;width:80px;text-align:center;color:#808080;text-shadow:1px 1px #fff">Vpřed</div><svg style="left:154px;top:53px" width="20" height="20" viewBox="0 0 20 20"><defs><linearGradient id="upg" x1="0" y1="0" x2="1" y2="1"><stop offset="0" stop-color="#fff"/><stop offset=".5" stop-color="#d8d8d8"/><stop offset="1" stop-color="#909090"/></linearGradient></defs><path d="M1.5 4.5l1.5-3h7l1.5 3" fill="#f0f0f0" stroke="#808080" stroke-width="1"/><rect x="0.5" y="4.5" width="19" height="13" fill="url(#upg)" stroke="#808080" stroke-width="1"/><path d="M19.5 4v14h-19" stroke="#000" stroke-width="1.2" fill="none"/><path d="M6.5 8v7h8" stroke="#404040" stroke-width="1" fill="none"/><path d="M4 10l2.5-3l2.5 3z" fill="#404040"/></svg><div class="t" style="left:124px;top:74px;width:80px;text-align:center;">Nahoru</div><svg style="left:213px;top:53px" width="20" height="20" viewBox="0 0 20 20"><path d="M4.5 0.5l6 11M16.5 0.5l-5 10" stroke="#fff" stroke-width="1" transform="translate(-1 0)"/><path d="M5.5 0l6.5 11.5M16.5 0.5l-5.5 10.5" stroke="#000" stroke-width="1.2"/><path d="M11.5 11.5l-2 2" stroke="#000" stroke-width="1"/><circle cx="6.5" cy="15.5" r="2.6" fill="none" stroke="#000" stroke-width="1.2"/><circle cx="6.5" cy="15.5" r=".8" fill="#000"/><circle cx="14.5" cy="15.5" r="2.6" fill="none" stroke="#000" stroke-width="1.2"/><circle cx="14.5" cy="15.5" r=".8" fill="#000"/></svg><div class="t" style="left:183px;top:74px;width:80px;text-align:center;">Vyjmout</div><svg style="left:266px;top:53px" width="20" height="20" viewBox="0 0 20 20"><path d="M0.5 0.5h9l3 3v11h-12z" fill="#fff" stroke="#808080" stroke-width="1"/><path d="M0 14.5h6" stroke="#000" stroke-width="1.2"/><path d="M9.5 0.5l3 3" stroke="#000"/><path d="M3 3.5h3M3 5.5h3M3 7.5h3M3 9.5h3M3 11.5h3" stroke="#000" stroke-width="1"/><path d="M6.5 3.5h10l3 3v12h-13z" fill="#f4f4f4" stroke="#808080" stroke-width="1"/><path d="M19.5 6v12.5h-13" stroke="#000" stroke-width="1.2" fill="none"/><path d="M16.5 3.5l3 3" stroke="#000"/><path d="M9 7.5h4M9 9.5h8M9 11.5h8M9 13.5h8M9 15.5h8" stroke="#707070" stroke-width="1"/></svg><div class="t" style="left:236px;top:74px;width:80px;text-align:center;">Kopírovat</div><svg style="left:319px;top:53px" width="20" height="20" viewBox="0 0 20 20"><defs><linearGradient id="pg" x1="0" y1="0" x2="1" y2="1"><stop offset="0" stop-color="#f8f8f8"/><stop offset="1" stop-color="#a0a0a0"/></linearGradient></defs><rect x="0.5" y="1.5" width="15" height="13" fill="url(#pg)" stroke="#909090" stroke-width="1"/><path d="M15.5 2v13h-15" stroke="#000" stroke-width="1.2" fill="none"/><path d="M3 4.5h9l-2-3h-5z" fill="#e8e8e8" stroke="#000" stroke-width="1"/><ellipse cx="7.5" cy="2.5" rx="1.2" ry=".5" fill="#000"/><rect x="8.5" y="8.5" width="10" height="9" fill="#fff" stroke="#000" stroke-width="1"/><path d="M10 11.5h3M10 13.5h7M10 15.5h7" stroke="#707070" stroke-width="1"/></svg><div class="t" style="left:289px;top:74px;width:80px;text-align:center;">Vložit</div><svg style="left:377px;top:53px" width="20" height="20" viewBox="0 0 20 20"><path d="M8 10l4-4h4c2 0 3.5 1.3 3.5 3.3c0 2-1.2 4-3.2 6" stroke="#000" stroke-width="3" fill="none"/><path d="M8 10l4-4h4c2 0 3.5 1.3 3.5 3.3c0 2-1.2 4-3.2 6" stroke="#e8e8e8" stroke-width="1.2" fill="none"/><path d="M2.5 4.5v8.5h8.5z" fill="#f4f4f4"/><path d="M2.5 4.5l8 8M2.5 13h8.5" stroke="#000" stroke-width="1.2" fill="none"/><path d="M2.5 4.5v8.5" stroke="#909090" stroke-width="1"/></svg><div class="t" style="left:347px;top:74px;width:80px;text-align:center;">Zpět</div><svg style="left:437px;top:53px" width="20" height="20" viewBox="0 0 20 20"><path d="M5 1.5l12 11.5M18 1.5l-14.5 16" stroke="#000" stroke-width="1.3"/><path d="M17.5 13.5l1.5 3" stroke="#000" stroke-width="1" stroke-dasharray="1 1"/><path d="M1 1.5c1-1 3-1 4.5 0.5l-2 2c-1 0-2-1-2.5-2.5z" fill="#fff" stroke="#808080" stroke-width=".8"/><path d="M2.5 17c0-2 1.5-4 4-6l1.5 1.5c-1 2-3 4-5.5 4.5z" fill="#fff" stroke="#808080" stroke-width=".8"/></svg><div class="t" style="left:407px;top:74px;width:80px;text-align:center;">Odstranit</div><svg style="left:490px;top:53px" width="20" height="20" viewBox="0 0 20 20"><rect x="1.5" y="3.5" width="15" height="15" fill="#fff" stroke="#909090" stroke-width="1"/><path d="M16.5 3v15.5h-15" stroke="#000" stroke-width="1.4" fill="none"/><path d="M5 6l5-4l2 5l2-2h5" stroke="#000" stroke-width="1" fill="none" stroke-dasharray="1 .6"/><path d="M13 5h6" stroke="#000" stroke-width="1.2"/><path d="M4 9.5h2M4 11.5h2M4 13.5h2M4 15.5h2M7 9.5h7M7 11.5h7M7 13.5h7M7 15.5h7" stroke="#505050" stroke-width="1"/></svg><div class="t" style="left:460px;top:74px;width:80px;text-align:center;">Vlastnosti</div><svg style="left:63px;top:68px" width="5" height="3" viewBox="0 0 5 3" shape-rendering="crispEdges"><path d="M0 0h5l-2.5 3z" fill="#808080"/><path d="M3 3h1v-1h1" stroke="#fff" stroke-width="1" fill="none"/></svg><svg style="left:129px;top:68px" width="5" height="3" viewBox="0 0 5 3" shape-rendering="crispEdges"><path d="M0 0h5l-2.5 3z" fill="#808080"/><path d="M3 3h1v-1h1" stroke="#fff" stroke-width="1" fill="none"/></svg><div style="left:193px;top:51px;width:2px;height:37px;box-shadow:inset 1px 0 #808080,inset -1px 0 #fff"></div><div style="left:359px;top:51px;width:2px;height:37px;box-shadow:inset 1px 0 #808080,inset -1px 0 #fff"></div><div style="left:418px;top:51px;width:2px;height:37px;box-shadow:inset 1px 0 #808080,inset -1px 0 #fff"></div><div style="left:530px;top:51px;width:2px;height:37px;box-shadow:inset 1px 0 #808080,inset -1px 0 #fff"></div><svg style="left:558px;top:54px" width="9" height="6" viewBox="0 0 9 6" shape-rendering="crispEdges"><path d="M0 0h2v1h1v1h1v2h-1v1h-1v1h-2v-1h1v-1h1v-2h-1v-1h-1zM5 0h2v1h1v1h1v2h-1v1h-1v1h-2v-1h1v-1h1v-2h-1v-1h-1z" fill="#000"/></svg><div style="left:159px;top:117px;width:16px;height:229px;background:#c0c0c0"></div><div class="raised" style="left:159px;top:117px;width:16px;height:16px;"><svg style="left:4px;top:6px" width="7" height="4" viewBox="0 0 7 4" shape-rendering="crispEdges"><path d="M3 0h1v1h1v1h1v1h1v1h-7v-1h1v-1h1v-1h1z" fill="#000"/></svg></div><div class="raised" style="left:159px;top:133px;width:16px;height:195px;"></div><div style="left:159px;top:328px;width:16px;height:2px;background:repeating-linear-gradient(90deg,#fff 0 1px,#c0c0c0 1px 2px)"></div><div class="raised" style="left:159px;top:330px;width:16px;height:16px;"><svg style="left:4px;top:6px" width="7" height="4" viewBox="0 0 7 4" shape-rendering="crispEdges"><path d="M0 0h7v1h-1v1h-1v1h-1v1h-1v-1h-1v-1h-1v-1h-1z" fill="#000"/></svg></div><div class="thin" style="left:4px;top:350px;width:240px;height:18px;"></div><div class="thin" style="left:246px;top:350px;width:104px;height:18px;"></div><div class="thin" style="left:352px;top:350px;width:218px;height:18px;"></div><svg style="left:354px;top:351px" width="16" height="16" viewBox="0 0 16 16"><defs><linearGradient id="scr16" x1="0" y1="0" x2="1" y2="1"><stop offset="0" stop-color="#90f0ff"/><stop offset="1" stop-color="#1870d8"/></linearGradient></defs><g shape-rendering="crispEdges"><rect x="1" y="0" width="13" height="1" fill="#909090"/><rect x="0" y="1" width="15" height="10" fill="#202020"/><rect x="1" y="1" width="13" height="9" fill="#f4f4fc"/><rect x="1" y="2" width="2" height="7" fill="#c8c8e0"/><rect x="4" y="2" width="9" height="7" fill="#000030"/><rect x="5" y="3" width="8" height="6" fill="url(#scr16)"/><rect x="1" y="11" width="2" height="4" fill="#303030"/><rect x="3" y="11" width="11" height="4" fill="#ecece4"/><rect x="3" y="11" width="10" height="1" fill="#c0c0b0"/><rect x="5" y="13" width="1" height="1" fill="#909080"/><rect x="7" y="13" width="1" height="1" fill="#909080"/><rect x="9" y="13" width="1" height="1" fill="#909080"/><rect x="11" y="13" width="1" height="1" fill="#909080"/><rect x="14" y="12" width="1" height="3" fill="#202020"/><rect x="3" y="15" width="12" height="1" fill="#202020"/></g></svg><div class="t" style="left:375px;top:353px;">Tento počítač</div><svg style="left:556px;top:354px" width="14" height="14" viewBox="0 0 14 14"><path d="M13 0L0 13M13 4L4 13M13 8L8 13" stroke="#fff" stroke-width="1"/><path d="M14 0L0 14M14 1L1 14M14 4L4 14M14 5L5 14M14 8L8 14M14 9L9 14" stroke="#808080" stroke-width="1"/></svg></div><div style="left:0px;top:740px;width:1024px;height:28px;background:#c0c0c0;box-shadow:inset 0 1px #dfdfdf,inset 0 2px #fff"></div><div class="raised" style="left:2px;top:744px;width:54px;height:22px;"><svg style="left:4px;top:4px" width="17" height="15" viewBox="0 0 17 15"><path d="M6 1.5l3-1.5l3 .5l4.5 .5v13l-4.5-1l-3-.5l-3 1.5z" fill="#000"/><path d="M7.5 2l2.8-.5v4.2h-2.8z" fill="#e02020"/><path d="M11.7 1.6l2.6.3v3.8h-2.6z" fill="#30e030"/><path d="M7.5 6.9h2.8v3.7l-2.8.3z" fill="#1818d0"/><path d="M11.7 6.9h2.6v3.9l-2.6-.3z" fill="#f0f020"/><rect x="0" y="2.5" width="1" height="1.5" fill="#000"/><rect x="0" y="5.5" width="1" height="1.5" fill="#a02020"/><rect x="0" y="8.5" width="1" height="1.5" fill="#2020a0"/><rect x="0" y="11.5" width="1" height="1.5" fill="#000"/><rect x="2" y="3" width="4.5" height="1.5" fill="#000"/><rect x="2" y="6" width="4.5" height="1.5" fill="#e02020"/><rect x="2" y="9" width="4.5" height="1.5" fill="#1818d0"/><rect x="2" y="12" width="4.5" height="1.5" fill="#000"/></svg><div class="t" style="left:22px;top:5px;font-weight:bold;font-size:12px">Start</div></div><div style="left:58px;top:744px;width:2px;height:22px;box-shadow:inset 1px 0 #808080,inset -1px 0 #fff"></div><div style="left:62px;top:746px;width:3px;height:18px;box-shadow:inset 1px 1px #fff,inset -1px -1px #808080"></div><svg style="left:72px;top:748px" width="16" height="16" viewBox="0 0 16 16"><circle cx="8" cy="8" r="6" fill="#3aa0f0"/><ellipse cx="8" cy="6" rx="2.2" ry="1.5" fill="#c0c0c0"/><path d="M5.5 9h9v1.5c-.5 1-1 1.5-2 2h-5z" fill="#c0c0c0"/><path d="M5.5 9h9" stroke="#1050a0"/><path d="M2 15c-3-2 1-9 7-12c3-2 6-2 6 0" stroke="#60c0f8" stroke-width="1.2" fill="none"/></svg><svg style="left:95px;top:748px" width="16" height="16" viewBox="0 0 16 16"><rect x="0.5" y="1.5" width="15" height="14" fill="#2880d0" stroke="#000" stroke-width="1"/><rect x="3" y="4" width="9" height="9" fill="#f0f0e0" stroke="#303030" stroke-width="1"/><path d="M8 9l6-8" stroke="#e0a020" stroke-width="2"/><path d="M6 11l2-2" stroke="#000" stroke-width="1.2"/></svg><svg style="left:118px;top:748px" width="16" height="16" viewBox="0 0 16 16"><ellipse cx="7" cy="11" rx="6" ry="3" fill="#909090" transform="rotate(20 7 11)"/><path fill-rule="evenodd" d="M10 1a5.5 7 0 1 1 0 14a5.5 7 0 1 1 0-14zM10 3a2 5 0 1 0 0 10a2 5 0 1 0 0-10z" fill="#c01818"/></svg><div style="left:143px;top:744px;width:2px;height:22px;box-shadow:inset 1px 0 #808080,inset -1px 0 #fff"></div><div style="left:146px;top:746px;width:3px;height:18px;box-shadow:inset 1px 1px #fff,inset -1px -1px #808080"></div><div class="raised" style="left:153px;top:744px;width:118px;height:22px;"><svg style="left:4px;top:4px" width="16" height="16" viewBox="0 0 16 16"><path d="M1 4h13l1 1v6l-1 1h-13l-1-1v-6z" fill="#000"/><rect x="1" y="5" width="13" height="6" fill="#e8e8e8"/><rect x="1" y="5" width="13" height="1" fill="#fff"/><rect x="4" y="7" width="8" height="2" fill="#000"/><rect x="2" y="7" width="1" height="1" fill="#d02020"/></svg><div class="t" style="left:22px;top:4px;letter-spacing:-0.3px">Výměnný disk (F:)</div></div><div class="raised" style="left:274px;top:744px;width:118px;height:22px;"><svg style="left:4px;top:4px" width="16" height="16" viewBox="0 0 16 16"><rect x="0" y="0" width="15" height="15" fill="#0000d0" stroke="#000040" stroke-width="1"/><rect x="4" y="0" width="7" height="5" fill="#c0c0c0"/><rect x="8" y="1" width="2" height="3" fill="#0000c0"/><rect x="2" y="7" width="11" height="8" fill="#fff"/><path d="M2 9h11M2 11h11" stroke="#c02020"/><rect x="2" y="13" width="11" height="2" fill="#e00000"/></svg><div class="t" style="left:22px;top:4px;letter-spacing:-0.3px">Windows Comma...</div></div><div style="left:395px;top:744px;width:118px;height:22px;background-color:#e0e0e0;background-image:repeating-conic-gradient(#fff 0 25%,#c0c0c0 0 50%);background-size:2px 2px;box-shadow:inset 1px 1px #000,inset -1px -1px #fff,inset 2px 2px #808080,inset -2px -2px #c0c0c0"><svg style="left:4px;top:5px" width="16" height="16" viewBox="0 0 16 16"><defs><linearGradient id="scr16" x1="0" y1="0" x2="1" y2="1"><stop offset="0" stop-color="#90f0ff"/><stop offset="1" stop-color="#1870d8"/></linearGradient></defs><g shape-rendering="crispEdges"><rect x="1" y="0" width="13" height="1" fill="#909090"/><rect x="0" y="1" width="15" height="10" fill="#202020"/><rect x="1" y="1" width="13" height="9" fill="#f4f4fc"/><rect x="1" y="2" width="2" height="7" fill="#c8c8e0"/><rect x="4" y="2" width="9" height="7" fill="#000030"/><rect x="5" y="3" width="8" height="6" fill="url(#scr16)"/><rect x="1" y="11" width="2" height="4" fill="#303030"/><rect x="3" y="11" width="11" height="4" fill="#ecece4"/><rect x="3" y="11" width="10" height="1" fill="#c0c0b0"/><rect x="5" y="13" width="1" height="1" fill="#909080"/><rect x="7" y="13" width="1" height="1" fill="#909080"/><rect x="9" y="13" width="1" height="1" fill="#909080"/><rect x="11" y="13" width="1" height="1" fill="#909080"/><rect x="14" y="12" width="1" height="3" fill="#202020"/><rect x="3" y="15" width="12" height="1" fill="#202020"/></g></svg><div class="t" style="left:23px;top:6px;font-weight:bold;font-size:12px;letter-spacing:0.1px">Tento počítač</div></div><div class="raised" style="left:516px;top:744px;width:118px;height:22px;"><svg style="left:4px;top:4px" width="16" height="16" viewBox="0 0 16 16"><rect x="0" y="0" width="15" height="15" fill="#0000d0" stroke="#000040" stroke-width="1"/><rect x="4" y="0" width="7" height="5" fill="#c0c0c0"/><rect x="8" y="1" width="2" height="3" fill="#0000c0"/><rect x="2" y="7" width="11" height="8" fill="#fff"/><path d="M2 9h11M2 11h11" stroke="#c02020"/><rect x="2" y="13" width="11" height="2" fill="#e00000"/></svg><div class="t" style="left:22px;top:4px;letter-spacing:-0.3px">Windows Comma...</div></div><div class="raised" style="left:637px;top:744px;width:118px;height:22px;"></div><div style="left:888px;top:744px;width:2px;height:22px;box-shadow:inset 1px 0 #808080,inset -1px 0 #fff"></div><div style="left:892px;top:744px;width:130px;height:22px;box-shadow:inset 1px 1px #808080,inset -1px -1px #fff"></div><svg style="left:895px;top:747px" width="16" height="16" viewBox="0 0 16 16"><rect x="0.5" y="0.5" width="12" height="13" fill="#fff" stroke="#000"/><rect x="0.5" y="0.5" width="12" height="3" fill="#303080"/><text x="1" y="7" font-size="6" font-family="Liberation Sans" fill="#000" font-weight="bold">38</text><circle cx="12" cy="12" r="3.8" fill="#c01010"/><circle cx="12" cy="12" r="2" fill="#fff"/></svg><svg style="left:912px;top:747px" width="16" height="16" viewBox="0 0 16 16"><rect x="0" y="0" width="16" height="16" fill="#000080"/><text x="1.5" y="12.5" font-size="11" font-family="Liberation Sans" fill="#fff">Cz</text></svg><svg style="left:929px;top:747px" width="16" height="16" viewBox="0 0 16 16"><rect x="0" y="0" width="16" height="16" fill="#60d0d0"/><path d="M0 0h16v16h-16z" fill="#fff" opacity=".3"/><rect x="3" y="4" width="2" height="11" fill="#000"/><rect x="1" y="5" width="5" height="2" fill="#70c030"/><rect x="10" y="2" width="4" height="13" fill="#000"/><rect x="11" y="3" width="2" height="3" fill="#e03020"/><rect x="11" y="6" width="2" height="3" fill="#e0c020"/><rect x="11" y="9" width="2" height="5" fill="#30a030"/></svg><svg style="left:946px;top:747px" width="16" height="16" viewBox="0 0 16 16"><path d="M2 14l5-10h9v10z" fill="#e02020"/><text x="3.5" y="13" font-size="8" font-style="italic" font-weight="bold" font-family="Liberation Sans" fill="#fff">ATi</text></svg><svg style="left:963px;top:747px" width="16" height="16" viewBox="0 0 16 16"><path d="M0 11l8-4l8 4l-8 4z" fill="#e8e8e8" stroke="#404040" stroke-width=".8"/><path d="M0 12l8 4l8-4" stroke="#404040" stroke-width=".8" fill="none"/><path d="M4 8l8-6" stroke="#108010" stroke-width="2.5"/><path d="M3 5v5h5z" fill="#10a010"/></svg><div class="t" style="left:987px;top:749px;">14:49</div>
</body></html>
